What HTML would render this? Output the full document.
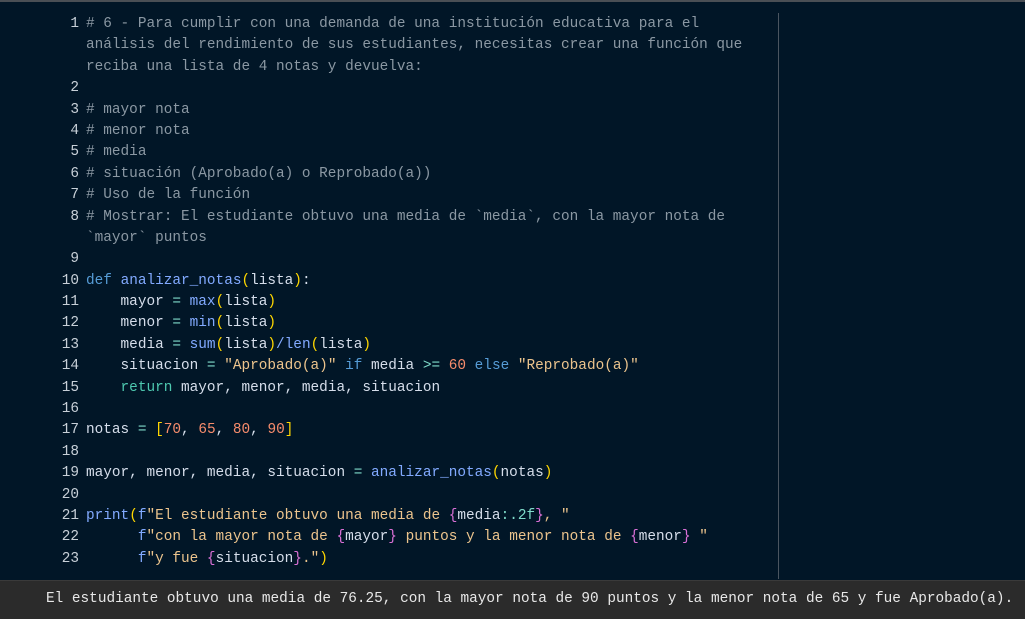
<!DOCTYPE html>
<html><head><meta charset="utf-8"><style>
body{margin:0;width:1025px;height:618px;background:#011627;overflow:hidden;position:relative;font-family:"Liberation Mono",monospace;font-size:14.4px;}
.top{position:absolute;left:0;top:0;width:1025px;height:2px;background:#4a4f55;}
.vl{position:absolute;left:778px;top:13px;width:1px;height:566px;background:#4a5560;}
.code{position:absolute;left:0;top:14px;}
.r{height:21.4px;line-height:21.4px;white-space:pre;position:relative;}
.n{position:absolute;left:0;width:79px;text-align:right;color:#c8d0d8;}
.t{position:absolute;left:86px;color:#d6deeb;}
.c{color:#8b98a3}.k{color:#569cd6}.f{color:#82aaff}.p{color:#ffd700}.s{color:#ecc48d}.m{color:#f78c6c}.b{color:#da70d6}.rt{color:#4ec9b0}.o{color:#7fdbca}
.out{position:absolute;left:0;top:580px;width:1025px;height:38px;background:#2b2b2b;border-top:1px solid #3a3a3a;color:#e8e8e8;line-height:36px;white-space:pre;}
.out span{position:absolute;left:46px;top:0;}
</style></head><body>
<div class="top"></div><div class="vl"></div>
<div class="code">
<div class="r"><span class="n">1</span><span class="t c"># 6 - Para cumplir con una demanda de una institución educativa para el</span></div>
<div class="r"><span class="t c">análisis del rendimiento de sus estudiantes, necesitas crear una función que</span></div>
<div class="r"><span class="t c">reciba una lista de 4 notas y devuelva:</span></div>
<div class="r"><span class="n">2</span></div>
<div class="r"><span class="n">3</span><span class="t c"># mayor nota</span></div>
<div class="r"><span class="n">4</span><span class="t c"># menor nota</span></div>
<div class="r"><span class="n">5</span><span class="t c"># media</span></div>
<div class="r"><span class="n">6</span><span class="t c"># situación (Aprobado(a) o Reprobado(a))</span></div>
<div class="r"><span class="n">7</span><span class="t c"># Uso de la función</span></div>
<div class="r"><span class="n">8</span><span class="t c"># Mostrar: El estudiante obtuvo una media de `media`, con la mayor nota de</span></div>
<div class="r"><span class="t c">`mayor` puntos</span></div>
<div class="r"><span class="n">9</span></div>
<div class="r"><span class="n">10</span><span class="t"><span class="k">def</span> <span class="f">analizar_notas</span><span class="p">(</span>lista<span class="p">)</span>:</span></div>
<div class="r"><span class="n">11</span><span class="t">    mayor <span class="o">=</span> <span class="f">max</span><span class="p">(</span>lista<span class="p">)</span></span></div>
<div class="r"><span class="n">12</span><span class="t">    menor <span class="o">=</span> <span class="f">min</span><span class="p">(</span>lista<span class="p">)</span></span></div>
<div class="r"><span class="n">13</span><span class="t">    media <span class="o">=</span> <span class="f">sum</span><span class="p">(</span>lista<span class="p">)</span><span class="f">/len</span><span class="p">(</span>lista<span class="p">)</span></span></div>
<div class="r"><span class="n">14</span><span class="t">    situacion <span class="o">=</span> <span class="s">"Aprobado(a)"</span> <span class="k">if</span> media <span class="o">&gt;=</span> <span class="m">60</span> <span class="k">else</span> <span class="s">"Reprobado(a)"</span></span></div>
<div class="r"><span class="n">15</span><span class="t">    <span class="rt">return</span> mayor, menor, media, situacion</span></div>
<div class="r"><span class="n">16</span></div>
<div class="r"><span class="n">17</span><span class="t">notas <span class="o">=</span> <span class="p">[</span><span class="m">70</span>, <span class="m">65</span>, <span class="m">80</span>, <span class="m">90</span><span class="p">]</span></span></div>
<div class="r"><span class="n">18</span></div>
<div class="r"><span class="n">19</span><span class="t">mayor, menor, media, situacion <span class="o">=</span> <span class="f">analizar_notas</span><span class="p">(</span>notas<span class="p">)</span></span></div>
<div class="r"><span class="n">20</span></div>
<div class="r"><span class="n">21</span><span class="t"><span class="f">print</span><span class="p">(</span><span class="f">f</span><span class="s">"El estudiante obtuvo una media de </span><span class="b">{</span>media<span class="o">:.2f</span><span class="b">}</span><span class="s">, "</span></span></div>
<div class="r"><span class="n">22</span><span class="t">      <span class="f">f</span><span class="s">"con la mayor nota de </span><span class="b">{</span>mayor<span class="b">}</span><span class="s"> puntos y la menor nota de </span><span class="b">{</span>menor<span class="b">}</span><span class="s"> "</span></span></div>
<div class="r"><span class="n">23</span><span class="t">      <span class="f">f</span><span class="s">"y fue </span><span class="b">{</span>situacion<span class="b">}</span><span class="s">."</span><span class="p">)</span></span></div>
</div>
<div class="out"><span>El estudiante obtuvo una media de 76.25, con la mayor nota de 90 puntos y la menor nota de 65 y fue Aprobado(a).</span></div>
</body></html>
